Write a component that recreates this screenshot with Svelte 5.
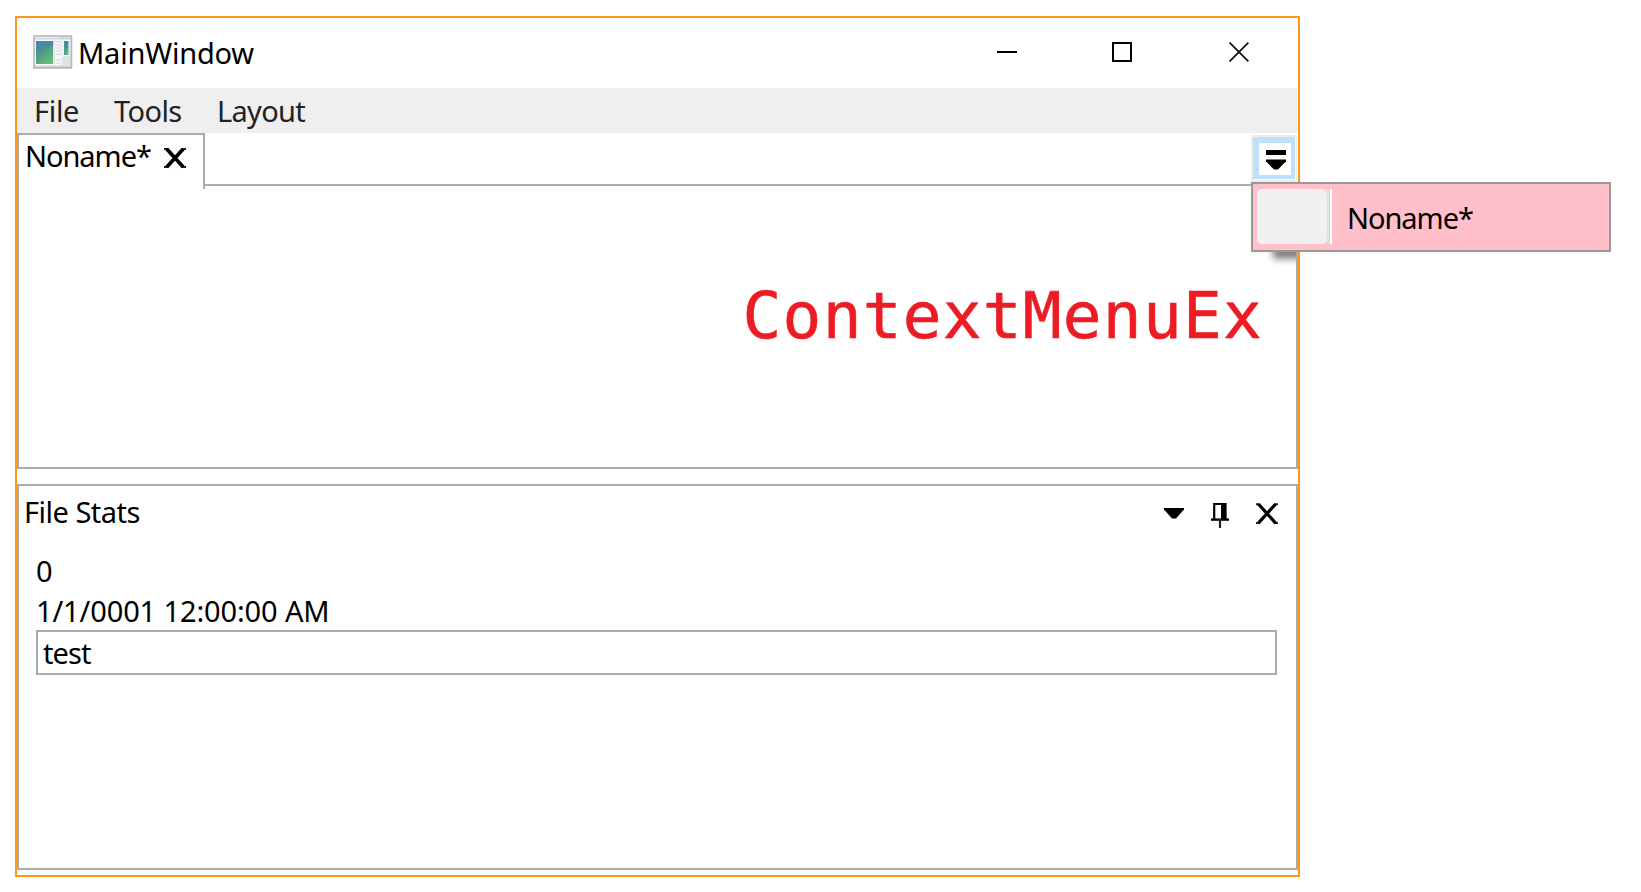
<script>
  const fileName = 'Noname*';
</script>

<div class="desktop">
  <div class="window">
    <header class="titlebar">
      <svg class="appicon" width="40" height="34" viewBox="0 0 40 34">
        <defs>
          <linearGradient id="pane" x1="0" y1="0" x2="0.6" y2="1">
            <stop offset="0" stop-color="#4a86ab" />
            <stop offset="0.5" stop-color="#4b9a88" />
            <stop offset="1" stop-color="#68b878" />
          </linearGradient>
          <linearGradient id="frame" x1="0" y1="0" x2="1" y2="1">
            <stop offset="0" stop-color="#f3f4f8" />
            <stop offset="1" stop-color="#dcdee1" />
          </linearGradient>
        </defs>
        <rect x="1" y="1" width="37.5" height="31.5" fill="url(#frame)" stroke="#b4b8c0" stroke-width="1.6" />
        <path d="M2 3.6H38" stroke="#cdd3de" stroke-width="1.2" />
        <path d="M27 2H37" stroke="#b4b8c2" stroke-width="1.2" stroke-dasharray="2 1" />
        <rect x="2.2" y="5" width="18.8" height="25" fill="#fafbfd" />
        <rect x="3" y="6" width="17.2" height="23" fill="url(#pane)" />
        <path d="M3 18Q8 12 20.2 11V6H3Z" fill="#4a80aa" opacity="0.45" />
        <rect x="22" y="5" width="7" height="25" fill="#f6f7f8" />
        <path d="M22.5 7H28.5M22.5 10H28.5M22.5 13H28.5M22.5 16H28.5M22.5 19H28.5M22.5 25H28.5M22.5 28H28.5" stroke="#d3d6da" stroke-width="1.2" />
        <rect x="30.2" y="5" width="6" height="16" fill="#fafbfc" />
        <rect x="31" y="6" width="4.6" height="14" fill="url(#pane)" />
        <path d="M33.4 7V13" stroke="#4a72ab" stroke-width="1.2" stroke-dasharray="2 1.5" />
        <path d="M0 32.8H39" stroke="#b0b2b6" stroke-width="1.2" />
      </svg>
      <span class="title">MainWindow</span>
      <div class="caption">
        <svg width="20" height="20" viewBox="0 0 20 20"><path d="M0 10H20" stroke="#000" stroke-width="2" /></svg>
        <svg width="20" height="20" viewBox="0 0 20 20"><rect x="1" y="1" width="18" height="18" fill="none" stroke="#000" stroke-width="2" /></svg>
        <svg width="20" height="20" viewBox="0 0 20 20"><path d="M.6 .6L19.4 19.4M19.4 .6L.6 19.4" stroke="#111" stroke-width="1.8" /></svg>
      </div>
    </header>

    <nav class="menu">
      <span class="file">File</span>
      <span class="tools">Tools</span>
      <span class="layout">Layout</span>
    </nav>

    <section class="documents">
      <div class="tabstrip">
        <div class="tab">
          <span class="filename">{fileName}</span>
          <svg width="24" height="22" viewBox="0 0 24 22">
            <path d="M1 1.9H5.2M18.8 1.9H23M1 20H5.2M18.8 20H23" stroke="#222" stroke-width="2" />
            <path d="M3.8 2L20.2 20M20.2 2L3.8 20" stroke="#000" stroke-width="3.7" />
          </svg>
        </div>
        <div class="rest">
          <div class="dropdown">
            <div class="face">
              <svg width="22" height="22" viewBox="0 0 22 22">
                <rect x="1" y="1" width="20" height="5" fill="#000" />
                <path d="M1 10.6H21V12.2L13 20.6H9L1 12.2Z" fill="#000" />
              </svg>
            </div>
          </div>
        </div>
      </div>
      <div class="editor"><span class="note">ContextMenuEx</span></div>
    </section>

    <section class="stats">
      <div class="head">
        <span class="heading">File Stats</span>
        <svg width="20" height="26" viewBox="0 0 20 26"><path d="M0 6H20V7.5L12 16.4H8L0 7.5Z" fill="#000" /></svg>
        <svg class="pin" width="18" height="26" viewBox="0 0 18 26">
          <path d="M3.2 17V2H14.5V17" fill="none" stroke="#000" stroke-width="2.2" />
          <path d="M12.2 1V17" stroke="#000" stroke-width="4.4" />
          <path d="M0 17.6H18" stroke="#000" stroke-width="2.4" />
          <path d="M9 17V26" stroke="#222" stroke-width="2.2" />
        </svg>
        <svg width="24" height="26" viewBox="0 0 24 26">
          <path d="M1 2.2H5M19 2.2H23M1 20.9H5M19 20.9H23" stroke="#222" stroke-width="2" />
          <path d="M3.6 2.2L20.4 20.9M20.4 2.2L3.6 20.9" stroke="#000" stroke-width="3.2" />
        </svg>
      </div>
      <div class="body">
        <div class="line">0</div>
        <div class="line date">1/1/0001 12:00:00 AM</div>
        <div class="textbox">test</div>
      </div>
    </section>
    <div class="shade"><div class="cast"></div></div>
  </div>

  <div class="popup">
    <div class="gutter"></div>
    <div class="groove"></div>
    <span class="filename">{fileName}</span>
  </div>
</div>

<style>
  :global(body) { margin: 0; background: #fff; }
  .desktop {
    position: relative;
    box-sizing: border-box;
    width: 1641px;
    height: 892px;
    padding: 16px 0 0 15px;
    overflow: hidden;
    background: #fff;
    color: #000;
    font: 29px/40px "Noto Sans", "Open Sans", sans-serif;
    white-space: nowrap;
  }
  .desktop div, .desktop section { box-sizing: border-box; }
  svg { display: block; flex: none; }
  .window {
    position: relative;
    box-sizing: border-box;
    width: 1285px;
    height: 861px;
    border: 2px solid #ff961c;
    background: #fff;
    display: flex;
    flex-direction: column;
  }
  .titlebar { flex: none; height: 70px; display: flex; align-items: center; padding: 0 49px 0 16px; }
  .appicon { margin-top: -3px; }
  .title { margin-left: 5px; letter-spacing: -0.2px; line-height: 70px; }
  .caption { margin-left: auto; display: flex; align-items: center; gap: 97px; margin-top: -2px; }
  .caption svg:first-child { margin-right: -2px; }
  .menu { flex: none; height: 45px; background: #efefef; color: #222; display: flex; line-height: 45px; padding-left: 17px; }
  .menu span { flex: none; }
  .file { width: 80px; letter-spacing: -0.3px; }
  .tools { width: 103px; letter-spacing: -0.6px; }
  .layout { letter-spacing: -0.7px; }

  .documents { flex: none; height: 336px; display: flex; flex-direction: column; }
  .tabstrip { flex: none; height: 53px; display: flex; }
  .tab {
    position: relative;
    width: 188px;
    height: 56px;
    border: 2px solid #ababab;
    border-bottom: 0;
    background: #fff;
    display: flex;
    align-items: flex-start;
    padding-left: 6px;
    line-height: 41px;
  }
  .filename { letter-spacing: -1.05px; }
  .tab .filename { width: 138px; }
  .tab svg { margin-top: 12px; }
  .rest { flex: 1; height: 53px; border-bottom: 2px solid #ababab; display: flex; justify-content: flex-end; padding: 2px 1px 0 0; }
  .dropdown { width: 46px; height: 49px; background: #ececec; padding: 2px; }
  .face {
    width: 42px;
    height: 42px;
    border: 5px solid #bfdfff;
    border-width: 6px 4px 4px 6px;
    box-shadow: 1px 1px 0 #fff;
    background: #fff;
    padding: 6px 0 0 6px;
  }
  .editor { flex: 1; border: 2px solid #ababab; border-top: 0; display: flex; justify-content: flex-end; padding: 90px 33px 0 0; }
  .note { font: 64.5px/80px "DejaVu Sans Mono", monospace; letter-spacing: 1.2px; color: #ed1c24; -webkit-text-stroke: 0.6px #ed1c24; }

  .stats { flex: none; height: 386px; margin-top: 15px; border: 2px solid #ababab; }
  .head { height: 50px; display: flex; align-items: flex-start; padding: 0 17px 0 5px; line-height: 52px; }
  .heading { letter-spacing: -0.5px; margin-right: auto; }
  .head svg { margin-top: 16px; }
  .head .pin { margin: 16px 26px 0 27px; }
  .body { padding: 14px 19px 0 17px; }
  .line { height: 40px; line-height: 42px; }
  .date { letter-spacing: -0.13px; }
  .textbox { height: 45px; border: 2px solid #ababb0; padding-left: 5px; line-height: 42px; letter-spacing: -0.9px; }

  .shade { position: absolute; left: 1247px; top: 234px; width: 32px; height: 20px; overflow: hidden; }
  .cast { position: absolute; left: 9px; top: -30px; width: 80px; height: 37px; background: #000; opacity: 0.5; filter: blur(3.5px); }
  .popup {
    position: absolute;
    left: 1251px;
    top: 182px;
    width: 360px;
    height: 70px;
    border: 2px solid #999;
    background: #ffc0cb;
    display: flex;
    align-items: flex-start;
    padding: 5px 0 0 4px;
  }
  .gutter { width: 70px; height: 55px; border-radius: 5px; background: #f0f0f0; }
  .groove { width: 5px; height: 55px; border-left: 2px solid #e2e2e2; border-right: 2px solid #fff; }
  .popup .filename { margin-left: 15px; line-height: 57px; }
</style>
